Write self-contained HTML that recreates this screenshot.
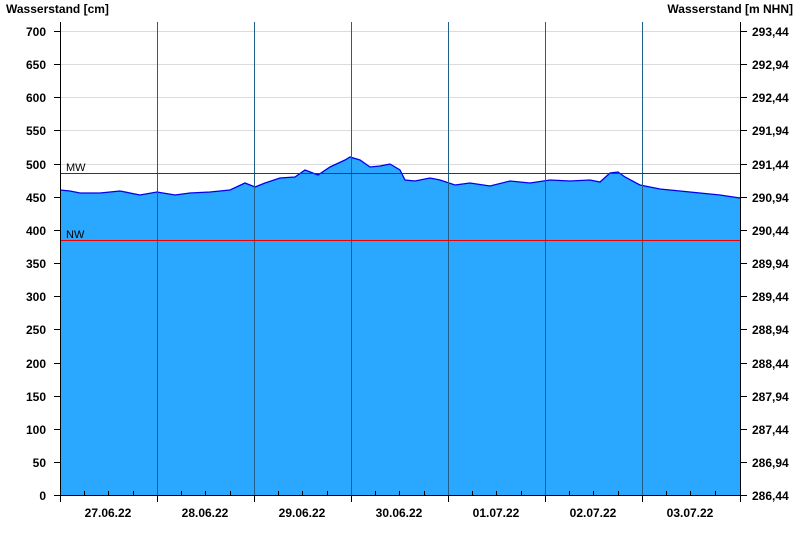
<!DOCTYPE html>
<html><head><meta charset="utf-8"><style>
body{margin:0;background:#fff;width:800px;height:550px;overflow:hidden}
svg text{font-family:"Liberation Sans",Arial,sans-serif;font-weight:bold;font-size:12px;fill:#000}
</style></head><body>
<svg width="800" height="550" xmlns="http://www.w3.org/2000/svg">
<text x="6" y="13">Wasserstand [cm]</text>
<text x="793" y="13" text-anchor="end">Wasserstand [m NHN]</text>
<g stroke="#dcdcdc" stroke-width="1">
<line x1="60" x2="740" y1="31.5" y2="31.5"/><line x1="60" x2="740" y1="64.5" y2="64.5"/><line x1="60" x2="740" y1="97.5" y2="97.5"/><line x1="60" x2="740" y1="130.5" y2="130.5"/><line x1="60" x2="740" y1="164.5" y2="164.5"/><line x1="60" x2="740" y1="197.5" y2="197.5"/><line x1="60" x2="740" y1="230.5" y2="230.5"/><line x1="60" x2="740" y1="263.5" y2="263.5"/><line x1="60" x2="740" y1="296.5" y2="296.5"/><line x1="60" x2="740" y1="329.5" y2="329.5"/><line x1="60" x2="740" y1="363.5" y2="363.5"/><line x1="60" x2="740" y1="396.5" y2="396.5"/><line x1="60" x2="740" y1="429.5" y2="429.5"/><line x1="60" x2="740" y1="462.5" y2="462.5"/>
</g>
<polygon fill="#2aa8ff" stroke="none" points="60,495 60,190 70,191 80,193 100,193 120,191 140,195 157,192 175,195 190,193 210,192 230,190 245,183 255,187 265,183 280,178 295,177 305,170 318,175 330,167 345,160 350,157 360,160 370,167 380,166 390,164 400,170 405,180 415,181 430,178 440,180 455,185 470,183 490,186 510,181 530,183 550,180 570,181 590,180 600,182 610,173 618,172 625,177 640,185 660,189 680,191 700,193 720,195 740,198 740,495"/>
<polyline fill="none" stroke="#0000ee" stroke-width="1.3" points="60,190 70,191 80,193 100,193 120,191 140,195 157,192 175,195 190,193 210,192 230,190 245,183 255,187 265,183 280,178 295,177 305,170 318,175 330,167 345,160 350,157 360,160 370,167 380,166 390,164 400,170 405,180 415,181 430,178 440,180 455,185 470,183 490,186 510,181 530,183 550,180 570,181 590,180 600,182 610,173 618,172 625,177 640,185 660,189 680,191 700,193 720,195 740,198"/>
<g stroke="#1f5f8a" stroke-width="1">
<line x1="157.5" x2="157.5" y1="22" y2="495"/><line x1="254.5" x2="254.5" y1="22" y2="495"/><line x1="351.5" x2="351.5" y1="22" y2="495"/><line x1="448.5" x2="448.5" y1="22" y2="495"/><line x1="545.5" x2="545.5" y1="22" y2="495"/><line x1="642.5" x2="642.5" y1="22" y2="495"/>
</g>
<line x1="60" x2="740" y1="173.5" y2="173.5" stroke="#006000"/>
<line x1="60" x2="740" y1="240.5" y2="240.5" stroke="#ee0000"/>
<text x="66" y="171" style="font-weight:normal;font-size:11px">MW</text>
<text x="66" y="238" style="font-weight:normal;font-size:11px">NW</text>
<g stroke="#000" stroke-width="1">
<line x1="60.5" x2="60.5" y1="22" y2="495"/>
<line x1="740.5" x2="740.5" y1="22" y2="495"/>
<line x1="60" x2="741" y1="495.5" y2="495.5"/>
</g>
<g stroke="#000">
<path d="M54,31.5h6M54,64.5h6M54,97.5h6M54,130.5h6M54,164.5h6M54,197.5h6M54,230.5h6M54,263.5h6M54,296.5h6M54,329.5h6M54,363.5h6M54,396.5h6M54,429.5h6M54,462.5h6M54,495.5h6"/>
<path d="M741,31.5h6M741,64.5h6M741,97.5h6M741,130.5h6M741,164.5h6M741,197.5h6M741,230.5h6M741,263.5h6M741,296.5h6M741,329.5h6M741,363.5h6M741,396.5h6M741,429.5h6M741,462.5h6M741,495.5h6"/>
<path d="M60.5,495v7M157.5,495v7M254.5,495v7M351.5,495v7M448.5,495v7M545.5,495v7M642.5,495v7M740.5,495v7"/>
<path d="M84.5,495v-4M108.5,495v-4M133.5,495v-4M181.5,495v-4M205.5,495v-4M230.5,495v-4M278.5,495v-4M302.5,495v-4M327.5,495v-4M375.5,495v-4M399.5,495v-4M424.5,495v-4M472.5,495v-4M496.5,495v-4M521.5,495v-4M569.5,495v-4M593.5,495v-4M618.5,495v-4M666.5,495v-4M690.5,495v-4M715.5,495v-4"/>
</g>
<g text-anchor="end">
<text x="46" y="36">700</text><text x="46" y="69">650</text><text x="46" y="102">600</text><text x="46" y="135">550</text><text x="46" y="169">500</text><text x="46" y="202">450</text><text x="46" y="235">400</text><text x="46" y="268">350</text><text x="46" y="301">300</text><text x="46" y="334">250</text><text x="46" y="368">200</text><text x="46" y="401">150</text><text x="46" y="434">100</text><text x="46" y="467">50</text><text x="46" y="500">0</text>
</g>
<g>
<text x="752" y="36">293,44</text><text x="752" y="69">292,94</text><text x="752" y="102">292,44</text><text x="752" y="135">291,94</text><text x="752" y="169">291,44</text><text x="752" y="202">290,94</text><text x="752" y="235">290,44</text><text x="752" y="268">289,94</text><text x="752" y="301">289,44</text><text x="752" y="334">288,94</text><text x="752" y="368">288,44</text><text x="752" y="401">287,94</text><text x="752" y="434">287,44</text><text x="752" y="467">286,94</text><text x="752" y="500">286,44</text>
</g>
<g text-anchor="middle">
<text x="108" y="517">27.06.22</text><text x="205" y="517">28.06.22</text><text x="302" y="517">29.06.22</text><text x="399" y="517">30.06.22</text><text x="496" y="517">01.07.22</text><text x="593" y="517">02.07.22</text><text x="690" y="517">03.07.22</text>
</g>
</svg>
</body></html>
